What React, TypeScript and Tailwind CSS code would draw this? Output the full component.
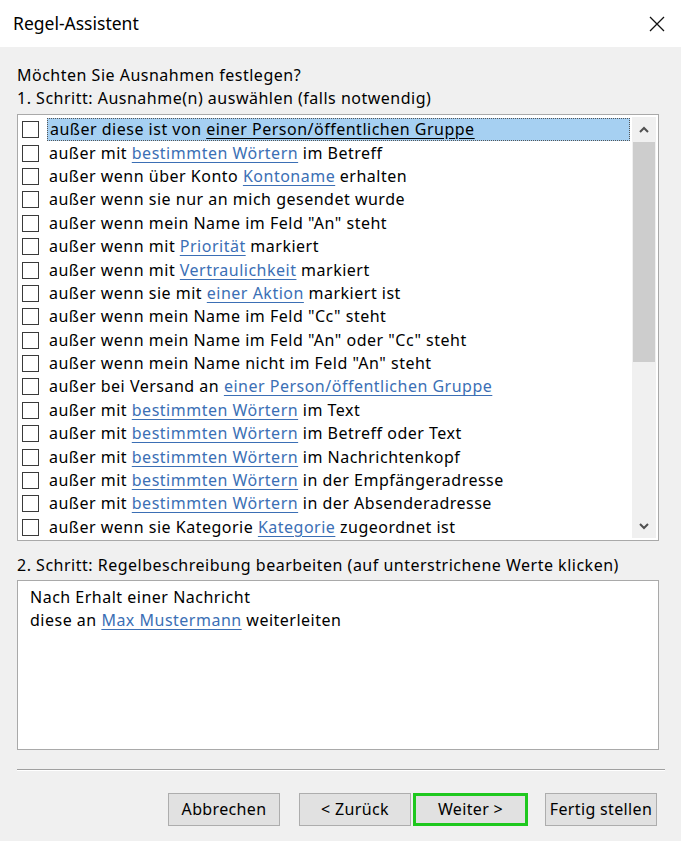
import React from 'react';

type Part = { t: string; link?: boolean };

const rows: Part[][] = [
  [{ t: 'außer diese ist von ' }, { t: 'einer Person/öffentlichen Gruppe', link: true }],
  [{ t: 'außer mit ' }, { t: 'bestimmten Wörtern', link: true }, { t: ' im Betreff' }],
  [{ t: 'außer wenn über Konto ' }, { t: 'Kontoname', link: true }, { t: ' erhalten' }],
  [{ t: 'außer wenn sie nur an mich gesendet wurde' }],
  [{ t: 'außer wenn mein Name im Feld "An" steht' }],
  [{ t: 'außer wenn mit ' }, { t: 'Priorität', link: true }, { t: ' markiert' }],
  [{ t: 'außer wenn mit ' }, { t: 'Vertraulichkeit', link: true }, { t: ' markiert' }],
  [{ t: 'außer wenn sie mit ' }, { t: 'einer Aktion', link: true }, { t: ' markiert ist' }],
  [{ t: 'außer wenn mein Name im Feld "Cc" steht' }],
  [{ t: 'außer wenn mein Name im Feld "An" oder "Cc" steht' }],
  [{ t: 'außer wenn mein Name nicht im Feld "An" steht' }],
  [{ t: 'außer bei Versand an ' }, { t: 'einer Person/öffentlichen Gruppe', link: true }],
  [{ t: 'außer mit ' }, { t: 'bestimmten Wörtern', link: true }, { t: ' im Text' }],
  [{ t: 'außer mit ' }, { t: 'bestimmten Wörtern', link: true }, { t: ' im Betreff oder Text' }],
  [{ t: 'außer mit ' }, { t: 'bestimmten Wörtern', link: true }, { t: ' im Nachrichtenkopf' }],
  [{ t: 'außer mit ' }, { t: 'bestimmten Wörtern', link: true }, { t: ' in der Empfängeradresse' }],
  [{ t: 'außer mit ' }, { t: 'bestimmten Wörtern', link: true }, { t: ' in der Absenderadresse' }],
  [{ t: 'außer wenn sie Kategorie ' }, { t: 'Kategorie', link: true }, { t: ' zugeordnet ist' }],
];

function Chevron({ up }: { up?: boolean }) {
  return (
    <svg width="10" height="7" viewBox="0 0 10 7" className={up ? '' : 'rotate-180'}>
      <path d="M1 6 L5 2 L9 6" fill="none" stroke="#505050" strokeWidth="2" />
    </svg>
  );
}

function DialogButton({ label, focused }: { label: string; focused?: boolean }) {
  return (
    <div
      className={`h-[33px] flex items-center justify-center text-[16px] tracking-[0.35px] text-black bg-[#e1e1e1] ${
        focused ? 'w-[115px] border-[3px] border-[#1ec81e]' : 'w-[112px] border border-[#adadad]'
      }`}
    >
      {label}
    </div>
  );
}

export default function App() {
  return (
    <div
      className="w-[681px] h-[841px] bg-[#f0f0f0] flex flex-col text-black"
      style={{ fontFamily: '"Noto Sans", "Open Sans", sans-serif' }}
    >
      <div className="h-[47px] bg-white flex items-center justify-between pl-[13px] pr-[16px]">
        <span className="text-[17.5px]">Regel-Assistent</span>
        <svg width="16" height="16" viewBox="0 0 16 16">
          <path d="M1 1 L15 15 M15 1 L1 15" stroke="#111" strokeWidth="1.3" />
        </svg>
      </div>

      <div className="flex flex-col px-[17px] pt-[17px] text-[16px] leading-[23px] tracking-[0.5px]">
        <div>Möchten Sie Ausnahmen festlegen?</div>
        <div>1. Schritt: Ausnahme(n) auswählen (falls notwendig)</div>

        <div className="mt-[4px] w-[642px] h-[427px] bg-white border border-[#a9a9a9] flex">
          <div className="flex-1 flex flex-col pt-[3px]">
            {rows.map((parts, i) => (
              <div key={i} className="h-[23.4px] flex items-center">
                <div className="ml-[4px] w-[17px] h-[17px] border border-[#3a3a3a] bg-white shrink-0" />
                <div
                  className={`ml-[8px] pl-[2px] h-[23px] flex items-center whitespace-pre ${
                    i === 0 ? 'flex-1 mr-[2px] bg-[#a6d0f2] border border-dotted border-[#555]' : ''
                  }`}
                >
                  {parts.map((p, j) =>
                    p.link ? (
                      <span
                        key={j}
                        className={`underline underline-offset-[3px] ${i === 0 ? 'text-black' : 'text-[#3b6fb5]'}`}
                      >
                        {p.t}
                      </span>
                    ) : (
                      <span key={j}>{p.t}</span>
                    )
                  )}
                </div>
              </div>
            ))}
          </div>
          <div className="w-[24px] mr-[2px] my-[2px] bg-[#f0f0f0] flex flex-col">
            <div className="h-[25px] flex items-center justify-center">
              <Chevron up />
            </div>
            <div className="h-[220px] mx-[1px] bg-[#cdcdcd]" />
            <div className="flex-1" />
            <div className="h-[24px] flex items-center justify-center">
              <Chevron />
            </div>
          </div>
        </div>

        <div className="mt-[13px]">2. Schritt: Regelbeschreibung bearbeiten (auf unterstrichene Werte klicken)</div>
        <div className="mt-[3px] w-[642px] h-[170px] bg-white border border-[#a9a9a9] pl-[12px] pt-[5px]">
          <div>Nach Erhalt einer Nachricht</div>
          <div>
            diese an <span className="underline underline-offset-[3px] text-[#3b6fb5]">Max Mustermann</span> weiterleiten
          </div>
        </div>

        <div className="mt-[19px] w-[648px] h-[2px] border-t border-[#a0a0a0] border-b border-b-white" />

        <div className="mt-[22px] flex items-center">
          <div className="ml-[151px]">
            <DialogButton label="Abbrechen" />
          </div>
          <div className="ml-[19px]">
            <DialogButton label="< Zurück" />
          </div>
          <div className="ml-[2px]">
            <DialogButton label="Weiter >" focused />
          </div>
          <div className="ml-[17px]">
            <DialogButton label="Fertig stellen" />
          </div>
        </div>
      </div>
    </div>
  );
}
